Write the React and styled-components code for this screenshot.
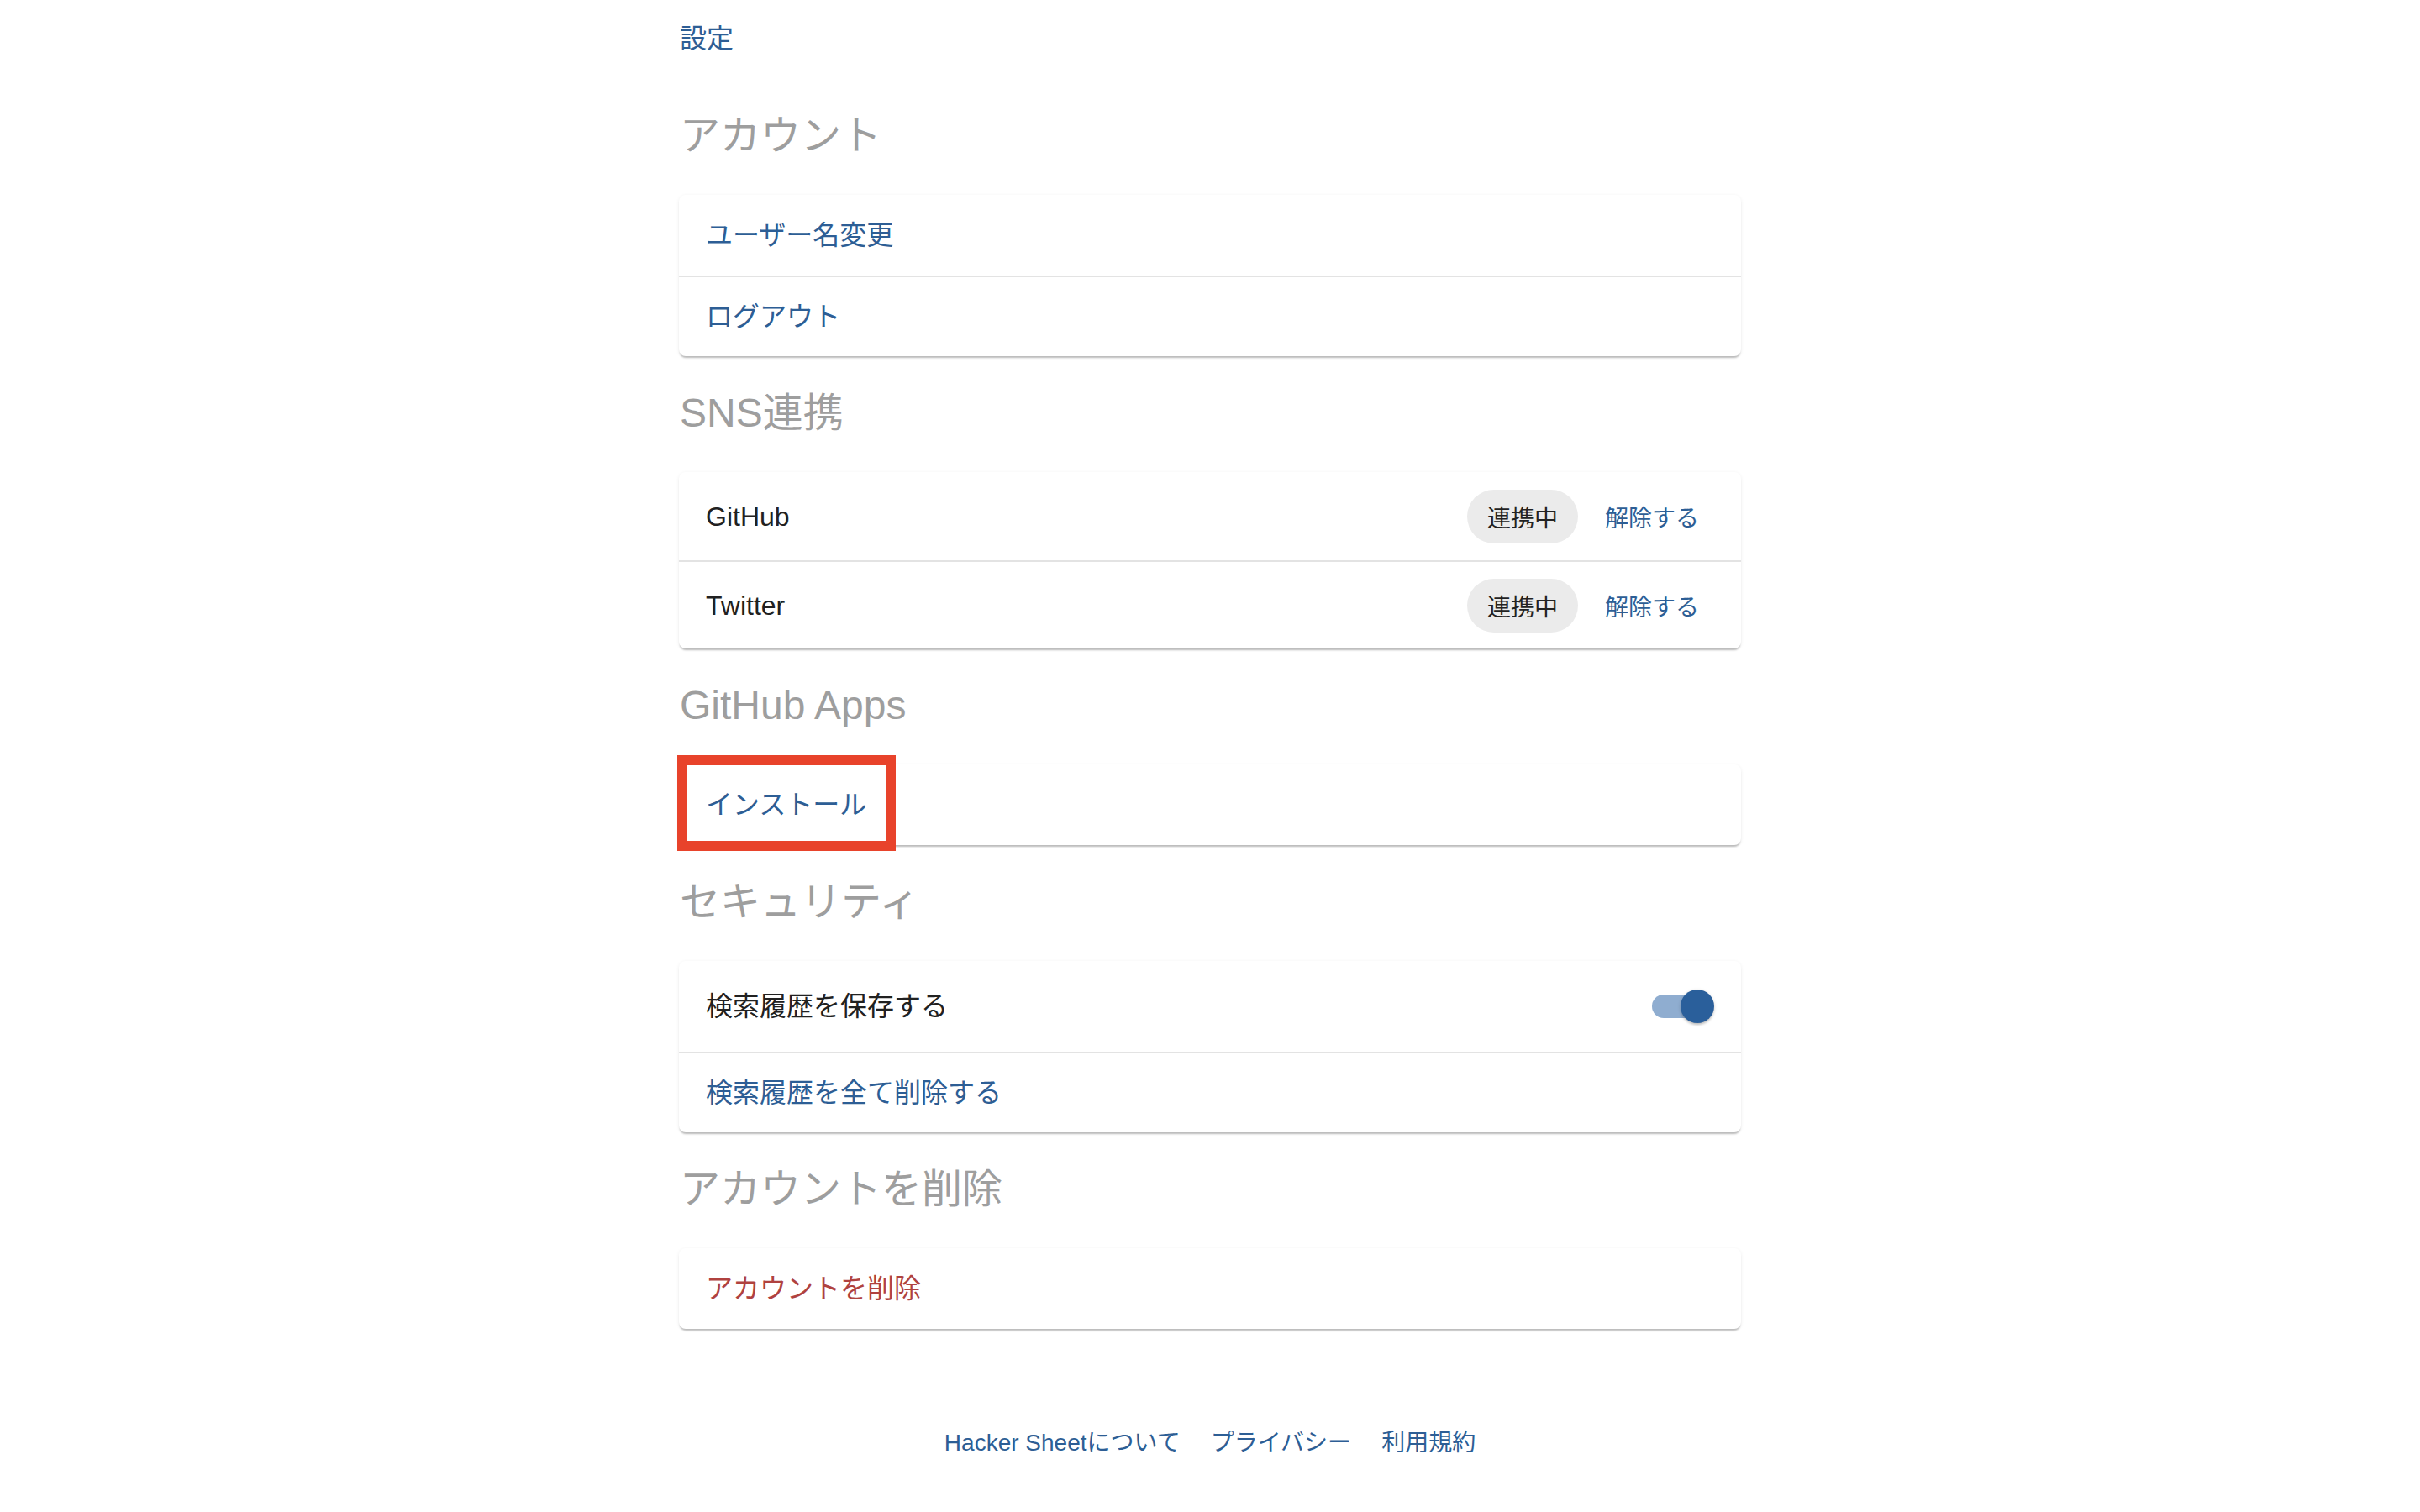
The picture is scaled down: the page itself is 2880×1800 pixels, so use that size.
import React from "react";
import styled, { createGlobalStyle } from "styled-components";

const GlobalStyle = createGlobalStyle`
  html, body {
    margin: 0;
    padding: 0;
    background: #ffffff;
  }
  body {
    font-family: "Liberation Sans", "Noto Sans CJK JP", sans-serif;
    color: #212121;
    -webkit-font-smoothing: antialiased;
  }
  * { box-sizing: border-box; }
`;

const BLUE = "#2d5e95";

const Page = styled.div`
  width: 1264px;
  margin: 0 auto;
  padding-top: 22px;
  padding-bottom: 60px;
`;

const TopLink = styled.a`
  display: block;
  width: max-content;
  margin-left: 1px;
  font-size: 32px;
  line-height: 48px;
  color: ${BLUE};
  text-decoration: none;
`;

const Section = styled.section`
  margin-top: ${(p) => (p.$first ? "60px" : "36px")};
`;

const Heading = styled.h2`
  margin: 0;
  font-size: 48px;
  line-height: 64px;
  font-weight: 400;
  color: #9e9e9e;
  padding-left: 1px;
`;

const Card = styled.div`
  position: relative;
  margin-top: 38px;
  background: #ffffff;
  border-radius: 8px;
  box-shadow: 0 3px 2px -1px rgba(0, 0, 0, 0.24), 0 1px 4px rgba(0, 0, 0, 0.07);
`;

const Row = styled.div`
  display: flex;
  align-items: center;
  justify-content: space-between;
  min-height: ${(p) => p.$h || 96}px;
  padding: 0 32px;
  & + & {
    border-top: 2px solid #e3e3e3;
  }
`;

const RowLink = styled.a`
  font-size: 32px;
  line-height: 44px;
  color: ${(p) => (p.$danger ? "#b0423f" : BLUE)};
  text-decoration: none;
  cursor: pointer;
`;

const RowLabel = styled.span`
  font-size: 32px;
  line-height: 44px;
  color: #212121;
`;

const Actions = styled.div`
  display: flex;
  align-items: center;
  gap: 14px;
`;

const Chip = styled.span`
  display: inline-flex;
  align-items: center;
  height: 64px;
  padding: 0 24px;
  border-radius: 32px;
  background: #ebebeb;
  font-size: 28px;
  color: #222222;
`;

const TextButton = styled.button`
  border: none;
  background: transparent;
  padding: 0 18px;
  height: 72px;
  font-family: inherit;
  font-size: 28px;
  color: ${BLUE};
  cursor: pointer;
`;

const SwitchWrap = styled.div`
  position: relative;
  width: 74px;
  height: 40px;
`;

const SwitchTrack = styled.div`
  position: absolute;
  left: 0;
  top: 6px;
  width: 72px;
  height: 28px;
  border-radius: 14px;
  background: #8fadd0;
`;

const SwitchThumb = styled.div`
  position: absolute;
  right: 0;
  top: 0;
  width: 40px;
  height: 40px;
  border-radius: 50%;
  background: #2a5f9b;
  box-shadow: 0 3px 3px -1px rgba(0, 0, 0, 0.2), 0 1px 4px rgba(0, 0, 0, 0.14);
`;

const Highlight = styled.div`
  position: absolute;
  left: -2px;
  top: -11px;
  width: 260px;
  height: 114px;
  border: 12px solid #e8432b;
  pointer-events: none;
`;

const Footer = styled.footer`
  margin-top: 116px;
  display: flex;
  justify-content: center;
  gap: 36px;
`;

const FooterLink = styled.a`
  font-size: 28px;
  line-height: 40px;
  color: ${BLUE};
  text-decoration: none;
`;

const Switch = () => (
  <SwitchWrap>
    <SwitchTrack />
    <SwitchThumb />
  </SwitchWrap>
);

const snsAccounts = ["GitHub", "Twitter"];

export default function App() {
  return (
    <>
      <GlobalStyle />
      <Page>
        <TopLink>設定</TopLink>

        <Section $first>
          <Heading>アカウント</Heading>
          <Card>
            <Row>
              <RowLink>ユーザー名変更</RowLink>
            </Row>
            <Row>
              <RowLink>ログアウト</RowLink>
            </Row>
          </Card>
        </Section>

        <Section>
          <Heading>SNS連携</Heading>
          <Card>
            {snsAccounts.map((name) => (
              <Row key={name} $h={105}>
                <RowLabel>{name}</RowLabel>
                <Actions>
                  <Chip>連携中</Chip>
                  <TextButton>解除する</TextButton>
                </Actions>
              </Row>
            ))}
          </Card>
        </Section>

        <Section>
          <Heading>GitHub Apps</Heading>
          <Card>
            <Row>
              <RowLink>インストール</RowLink>
            </Row>
            <Highlight />
          </Card>
        </Section>

        <Section>
          <Heading>セキュリティ</Heading>
          <Card>
            <Row $h={108}>
              <RowLabel>検索履歴を保存する</RowLabel>
              <Switch />
            </Row>
            <Row>
              <RowLink>検索履歴を全て削除する</RowLink>
            </Row>
          </Card>
        </Section>

        <Section>
          <Heading>アカウントを削除</Heading>
          <Card>
            <Row>
              <RowLink $danger>アカウントを削除</RowLink>
            </Row>
          </Card>
        </Section>

        <Footer>
          <FooterLink>Hacker Sheetについて</FooterLink>
          <FooterLink>プライバシー</FooterLink>
          <FooterLink>利用規約</FooterLink>
        </Footer>
      </Page>
    </>
  );
}
